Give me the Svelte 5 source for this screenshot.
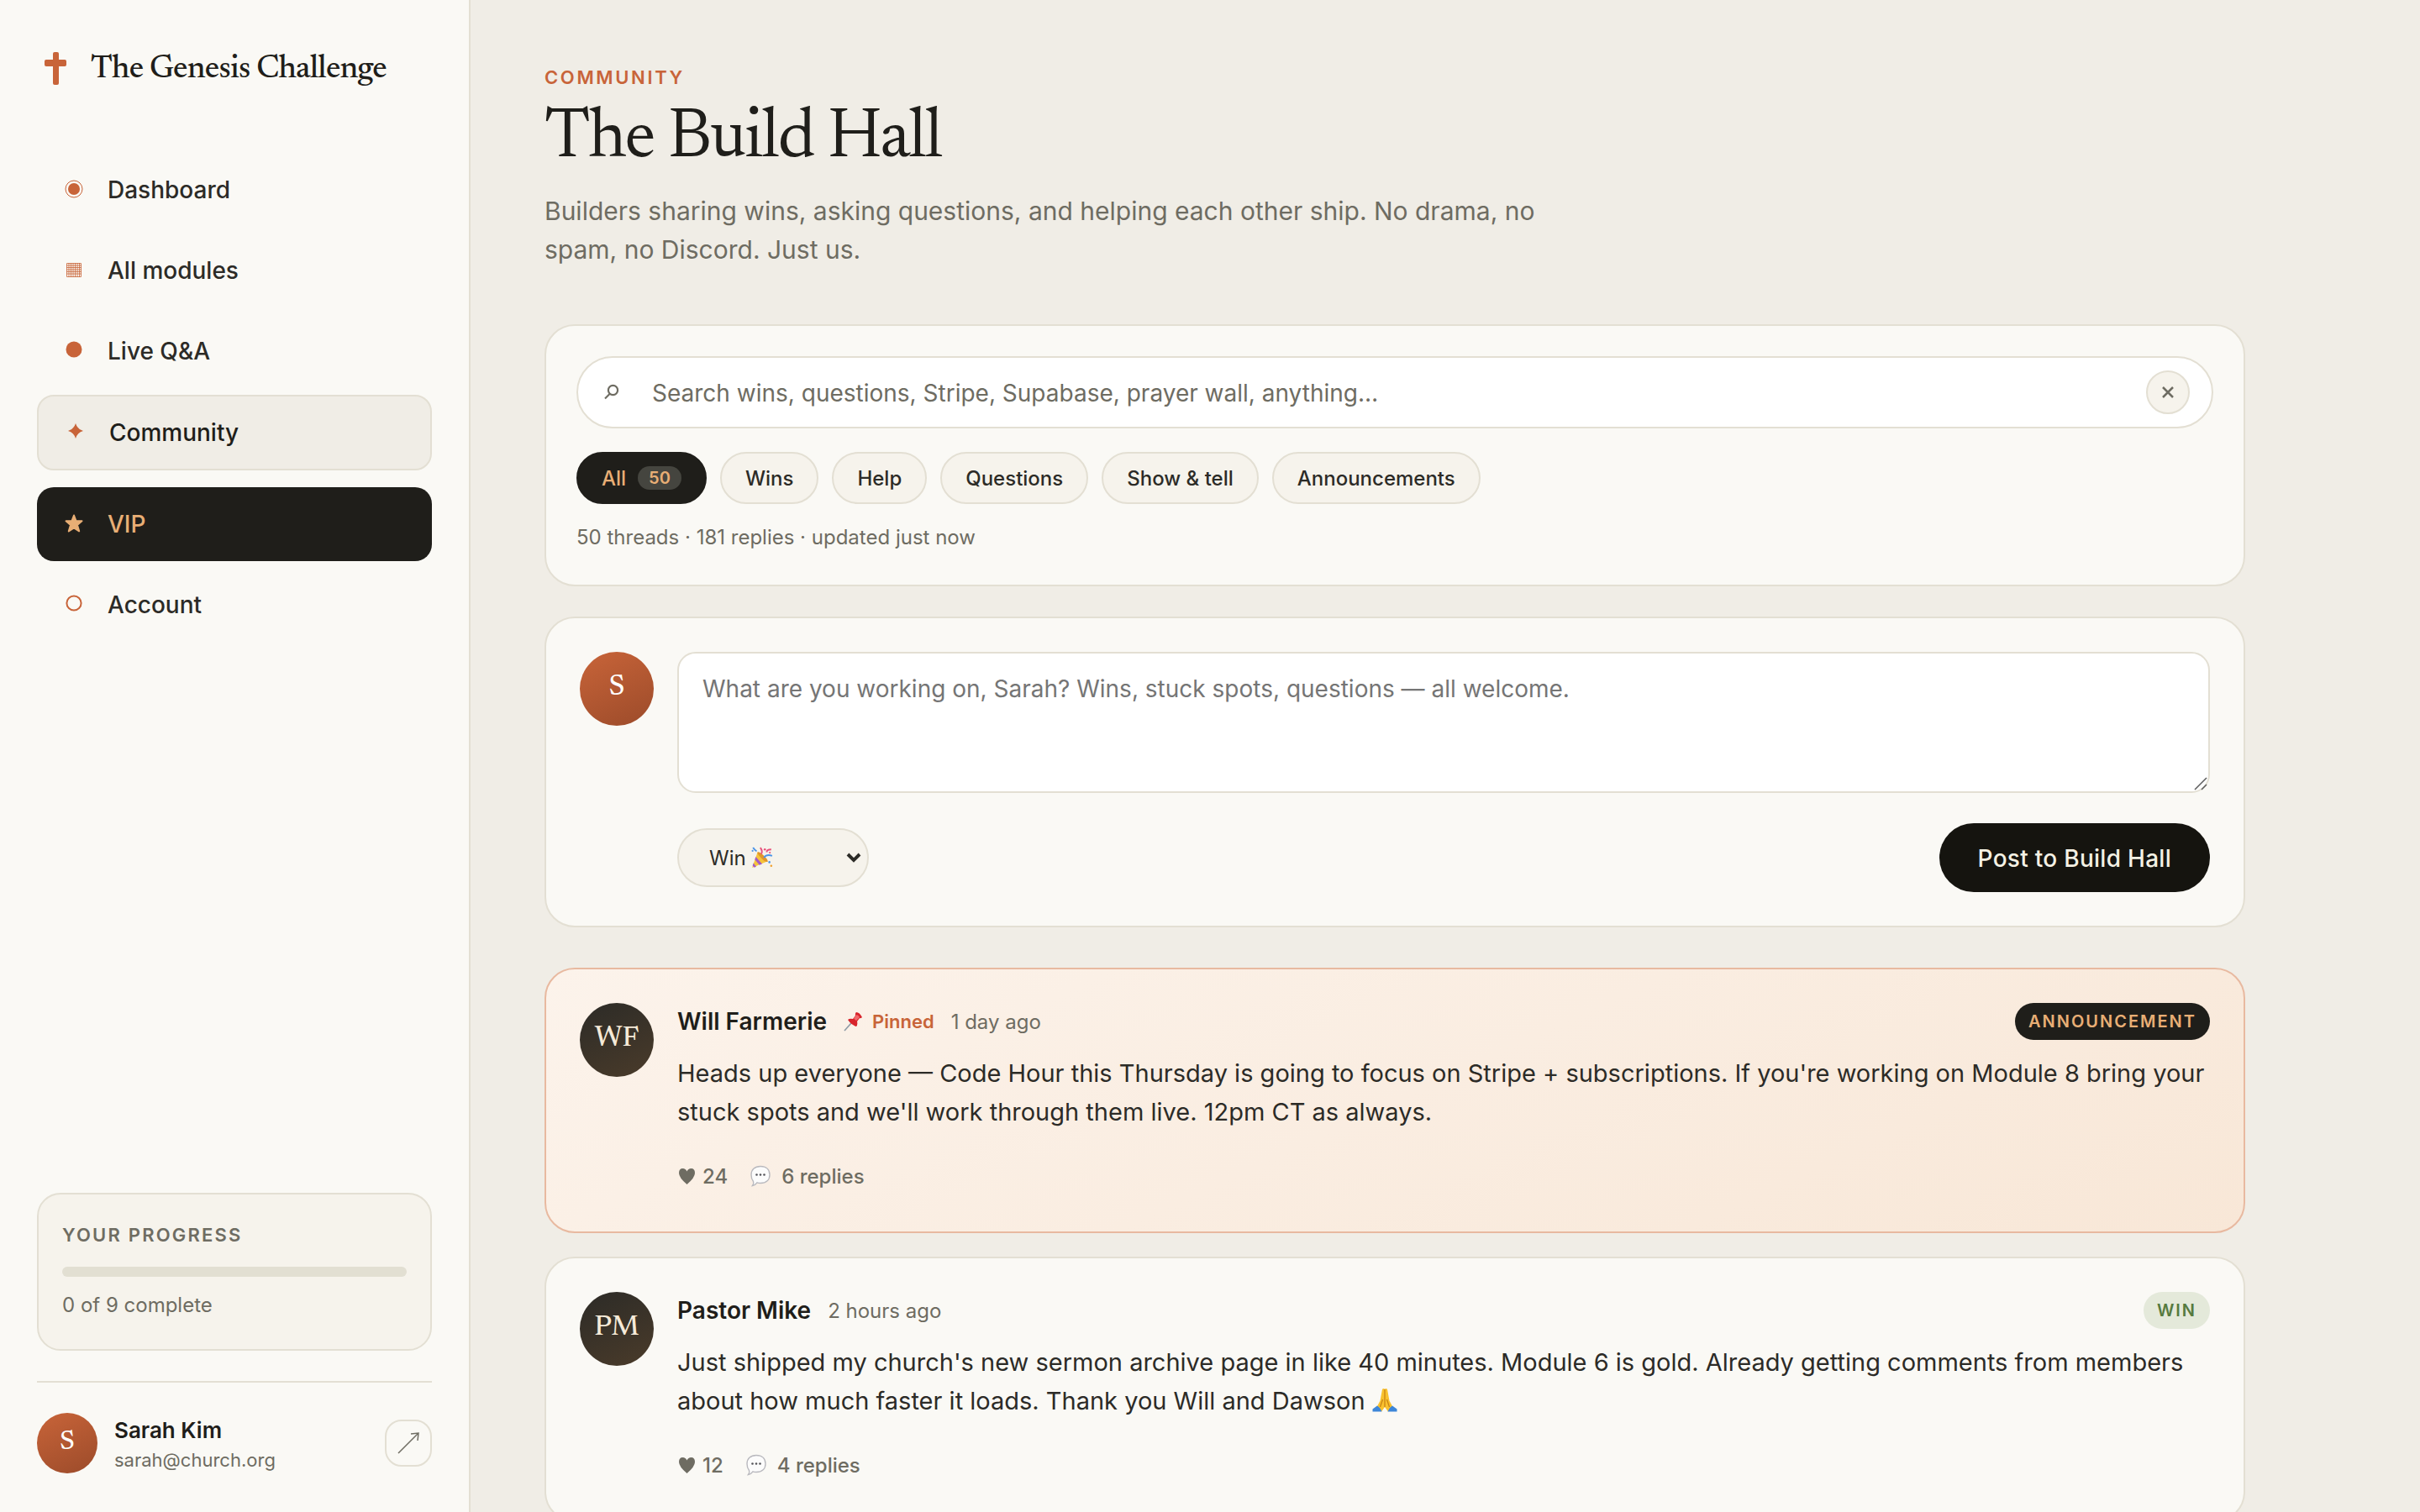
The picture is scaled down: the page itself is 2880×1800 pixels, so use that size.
<script lang="ts">
  type Post = {
    initials: string;
    name: string;
    pinned: boolean;
    time: string;
    tag: string;
    kind: 'announcement' | 'win';
    body: string;
    prayer: boolean;
    likes: number;
    replies: number;
  };

  const nav = [
    { label: 'Dashboard', icon: 'target' },
    { label: 'All modules', icon: 'grid' },
    { label: 'Live Q&A', icon: 'dot' },
    { label: 'Community', icon: 'spark' },
    { label: 'VIP', icon: 'star' },
    { label: 'Account', icon: 'ring' }
  ];

  const filters = ['All', 'Wins', 'Help', 'Questions', 'Show & tell', 'Announcements'];

  const posts: Post[] = [
    {
      initials: 'WF',
      name: 'Will Farmerie',
      pinned: true,
      time: '1 day ago',
      tag: 'Announcement',
      kind: 'announcement',
      body: "Heads up everyone — Code Hour this Thursday is going to focus on Stripe + subscriptions. If you're working on Module 8 bring your stuck spots and we'll work through them live. 12pm CT as always.",
      prayer: false,
      likes: 24,
      replies: 6
    },
    {
      initials: 'PM',
      name: 'Pastor Mike',
      pinned: false,
      time: '2 hours ago',
      tag: 'Win',
      kind: 'win',
      body: "Just shipped my church's new sermon archive page in like 40 minutes. Module 6 is gold. Already getting comments from members about how much faster it loads. Thank you Will and Dawson",
      prayer: true,
      likes: 12,
      replies: 4
    }
  ];

  const done = 0;
  const total = 9;

  let active = $state('All');
  let query = $state('');
  let draft = $state('');
  let kind = $state('Win');
</script>

<div class="shell">
  <aside class="sidebar">
    <a class="brand" href="#home">
      <svg class="cross" viewBox="0 0 44 44" aria-hidden="true">
        <rect x="19" y="2" width="7" height="39" rx="2" />
        <rect x="9" y="11" width="26" height="8" rx="2" />
      </svg>
      <span>The Genesis Challenge</span>
    </a>

    <nav class="nav" aria-label="Main">
      {#each nav as item (item.label)}
        <a
          class="nav-item"
          class:current={item.label === 'Community'}
          class:vip={item.label === 'VIP'}
          href="#{item.icon}"
        >
          <svg class="nav-icon" viewBox="0 0 28 28" aria-hidden="true">
            {#if item.icon === 'target'}
              <circle class="line" cx="14" cy="13" r="10" />
              <circle cx="14" cy="13" r="7" />
            {:else if item.icon === 'grid'}
              <path class="line fine" d="M5.500 5.500h17v16h-17zM8 5v17M10.500 5v17M13 5v17M15.500 5v17M18 5v17M20.500 5v17M5 8h18M5 10.500h18M5 13h18M5 15.500h18M5 18h18" />
            {:else if item.icon === 'dot'}
              <circle cx="14" cy="12" r="9.500" />
            {:else if item.icon === 'spark'}
              <path d="M14 3q2 7 9 9q-7 2-9 9q-2-7-9-9q7-2 9-9z" />
            {:else if item.icon === 'star'}
              <path class="soft" d="M14 3.500l2.600 6.800h6.900l-5.500 4.700l2.200 7.400l-6.200-4.100l-6.200 4.100l2.200-7.400L4.500 10.300h6.900z" />
            {:else}
              <circle class="ring" cx="14" cy="12" r="8.600" />
            {/if}
          </svg>
          <span>{item.label}</span>
        </a>
      {/each}
    </nav>

    <section class="progress">
      <h2>Your progress</h2>
      <div class="track" role="progressbar" aria-label="Your progress" aria-valuemin="0" aria-valuemax={total} aria-valuenow={done}>
        <div class="fill" style="width: {(done / total) * 100}%"></div>
      </div>
      <p>{done} of {total} complete</p>
    </section>

    <footer class="user">
      <span class="avatar small warm">S</span>
      <div class="who">
        <strong>Sarah Kim</strong>
        <span>sarah@church.org</span>
      </div>
      <button class="leave" aria-label="Sign out">
        <svg viewBox="0 0 28 28" aria-hidden="true"><path d="M2 26L26 2M17 3l9-1l-1 9" /></svg>
      </button>
    </footer>
  </aside>

  <main class="main">
    <div class="content">
      <header class="head">
        <p class="eyebrow">Community</p>
        <h1>The Build Hall</h1>
        <p class="lede">Builders sharing wins, asking questions, and helping each other ship. No drama, no spam, no Discord. Just us.</p>
      </header>

      <section class="card finder">
        <div class="search">
          <svg class="lens" viewBox="0 0 20 20" aria-hidden="true"><circle cx="11.500" cy="7.500" r="5.600" /><path d="M8 11.500l-6 6" /></svg>
          <input type="text" aria-label="Search threads" placeholder="Search wins, questions, Stripe, Supabase, prayer wall, anything…" bind:value={query} />
          <button class="clear" aria-label="Clear search" onclick={() => (query = '')}>
            <svg viewBox="0 0 16 16" aria-hidden="true"><path d="M2 2l12 12M14 2L2 14" /></svg>
          </button>
        </div>
        <div class="chips">
          {#each filters as filter (filter)}
            <button class="chip" class:on={active === filter} onclick={() => (active = filter)}>
              {filter}
              {#if filter === 'All'}<span class="count">50</span>{/if}
            </button>
          {/each}
        </div>
        <p class="stats">50 threads · 181 replies · updated just now</p>
      </section>

      <form class="card compose" onsubmit={(e) => e.preventDefault()}>
        <span class="avatar warm">S</span>
        <div class="compose-body">
          <div class="area">
            <textarea aria-label="New post" placeholder="What are you working on, Sarah? Wins, stuck spots, questions — all welcome." bind:value={draft}></textarea>
            <svg class="grip" viewBox="0 0 18 18" aria-hidden="true"><path d="M2 16L16 2M10 16l6-6" /></svg>
          </div>
          <div class="compose-foot">
            <div class="kind">
              <select aria-label="Post type" bind:value={kind}>
                <option>Win</option>
                <option>Help</option>
                <option>Question</option>
              </select>
              <svg class="party" viewBox="0 0 24 24" aria-hidden="true">
                <path fill="#f6c33b" d="M1 23L7 6q7 3 11 10z" />
                <path fill="#a35bc4" d="M5 11l7 8l-3 1l-5-6zM2.500 18l3 4l-2 .8l-2-2z" />
                <path fill="#e0952a" d="M7 6q2-1 7 4q5 5 4 6.500q-2 1-7-4T7 6z" />
                <path fill="none" stroke="#4b94e8" stroke-width="1.800" d="M14 12q3-4 9-2M6 5Q4 4 2 1" />
                <path fill="none" stroke="#e8507a" stroke-width="1.800" d="M11 8q2-3-1-7M17 6q0-3 5-3" />
                <circle fill="#e8507a" cx="15" cy="3" r="1.200" /><circle fill="#4b94e8" cx="20" cy="17" r="1.200" />
                <circle fill="#4b94e8" cx="1.500" cy="4.500" r="1" /><circle fill="#f0a030" cx="22" cy="21" r="1.200" /><circle fill="#e8507a" cx="20.500" cy="6.500" r="1" />
              </svg>
              <svg class="caret" viewBox="0 0 18 12" aria-hidden="true"><path d="M2 2l7 7l7-7" /></svg>
            </div>
            <button class="post-btn" type="submit">Post to Build Hall</button>
          </div>
        </div>
      </form>

      <section class="feed" aria-label="Threads">
        {#each posts as post (post.name)}
          <article class="card post" class:pinned={post.pinned}>
            <span class="avatar">{post.initials}</span>
            <div class="post-body">
              <header class="meta">
                <strong>{post.name}</strong>
                {#if post.pinned}
                  <span class="pin">
                    <svg viewBox="0 0 24 24" aria-hidden="true">
                      <path fill="none" stroke="#8d9aa5" stroke-width="1.600" d="M1 23l8-9" />
                      <path fill="#d8242c" d="M15 1q4 0 7 6q-1 1.500-3 1l-3 4q1 4-1 6q-6-2-10-8q2-2 6-1l3-4q-.500-3 1-4z" />
                      <path fill="#f2686b" d="M15.500 4q2 .5 3.500 3l-4 4q-2-1-3-3z" />
                    </svg>
                    Pinned
                  </span>
                {/if}
                <time>{post.time}</time>
                <span class="tag {post.kind}">{post.tag}</span>
              </header>
              <p class="text">
                {post.body}
                {#if post.prayer}
                  <svg class="pray" viewBox="0 0 30 30" role="img" aria-label="Folded hands">
                    <path fill="#f9c22e" d="M14.600 1.500q-2.200-1.500-2.700 1L9.500 15.500L5.500 23l5.500 5.500l4-5.500l4 5.500l5.500-5.500l-4-7.500L18.100 2.500q-.5-2.500-2.700-1z" />
                    <path fill="none" stroke="#c98416" stroke-width="1.300" d="M15 2v21M12.500 14l-3 9M17.500 14l3 9" />
                    <path fill="#3d86d8" d="M.5 25.500L6 21.500q3.500 2 5.500 7H.5zM29.500 25.500L24 21.500q-3.500 2-5.500 7h11z" />
                  </svg>
                {/if}
              </p>
              <div class="actions">
                <button aria-label="Like, {post.likes}">
                  <svg class="heart" viewBox="0 0 22 22" aria-hidden="true"><path d="M11.500 21Q2 13 2 7.500Q2 2 6.500 2q3.500 0 5 3.500Q13 2 16.500 2q4.500 0 4.500 5.500Q21 13 11.500 21z" /></svg>
                  {post.likes}
                </button>
                <button class="reply">
                  <svg class="bubble" viewBox="0 0 26 26" aria-hidden="true">
                    <path fill="#fcfcfc" stroke="#b9b9be" stroke-width="1.400" d="M13 1.500c7 0 11 4 11 10s-4 10-11 10q-2.500 0-4-.6q-2 3-5.500 3.600q2-2.500 1-5Q2 16.500 2 11.500c0-6 4-10 11-10z" />
                    <circle cx="8.500" cy="11.500" r="1.300" /><circle cx="13" cy="11.500" r="1.300" /><circle cx="17.500" cy="11.500" r="1.300" />
                  </svg>
                  {post.replies} replies
                </button>
              </div>
            </div>
          </article>
        {/each}
      </section>
    </div>
  </main>
</div>

<style>
  :global(body) {
    margin: 0;
    background: #f0ede6;
  }

  .shell {
    --ink: #1f1e1a;
    --text: #2c2b27;
    --muted: #6e6c62;
    --line: #e3dfd3;
    --paper: #faf9f5;
    --cream: #f6f3ec;
    --accent: #c86439;
    --gold: #e8ae75;
    --serif: Newsreader, 'Liberation Serif', serif;
    display: grid;
    grid-template-columns: 560px minmax(0, 1fr);
    height: 100vh;
    font-family: Inter, 'Liberation Sans', sans-serif;
    font-size: 28px;
    color: var(--text);
  }

  .shell *,
  .shell {
    box-sizing: border-box;
  }

  h1, h2, p { margin: 0; }
  button, input, textarea, select { font: inherit; color: inherit; margin: 0; }
  button { cursor: pointer; }
  svg { display: block; flex: none; }

  /* Sidebar */
  .sidebar {
    display: flex;
    flex-direction: column;
    padding: 58px 44px 46px;
    background: var(--paper);
    border-right: 2px solid var(--line);
  }

  .brand {
    display: flex;
    align-items: center;
    gap: 20px;
    height: 48px;
    margin-bottom: 76px;
    font-family: var(--serif);
    font-size: 39px;
    font-weight: 500;
    letter-spacing: -0.02em;
    color: var(--ink);
    text-decoration: none;
  }

  .cross { width: 44px; height: 44px; fill: var(--accent); }

  .nav { display: flex; flex-direction: column; gap: 8px; }

  .nav-item {
    display: flex;
    align-items: center;
    gap: 26px;
    height: 88px;
    padding: 0 30px;
    border-radius: 20px;
    font-weight: 500;
    color: var(--text);
    text-decoration: none;
  }

  .nav-icon { width: 28px; height: 28px; fill: var(--accent); }
  .nav-icon .line { fill: none; stroke: var(--accent); stroke-width: 1; }
  .nav-icon .fine { stroke-width: 0.8; }
  .nav-icon .ring { fill: none; stroke: var(--accent); stroke-width: 2; }
  .nav-icon .soft { stroke: var(--gold); stroke-width: 2; stroke-linejoin: round; }

  .nav-item.current {
    height: 90px;
    border: 2px solid var(--line);
    background: #f0ede6;
    color: var(--ink);
  }

  .nav-item.vip {
    margin-top: 12px;
    background: var(--ink);
    color: var(--gold);
  }

  .nav-item.vip .nav-icon { fill: var(--gold); }

  .progress {
    margin-top: auto;
    padding: 34px 28px 36px;
    border: 2px solid var(--line);
    border-radius: 28px;
    background: var(--cream);
    color: var(--muted);
  }

  .progress h2 {
    font-size: 22px;
    font-weight: 600;
    line-height: 28px;
    letter-spacing: 0.1em;
    text-transform: uppercase;
  }

  .track {
    height: 12px;
    margin: 24px 0 18px;
    border-radius: 6px;
    background: #e2dfd2;
    overflow: hidden;
  }

  .fill { height: 100%; background: var(--accent); }
  .progress p { font-size: 24px; line-height: 32px; }

  .user {
    display: flex;
    align-items: center;
    gap: 20px;
    margin-top: 36px;
    padding-top: 36px;
    border-top: 2px solid var(--line);
  }

  .who { display: flex; flex-direction: column; flex: 1; padding-top: 2px; }
  .who strong { font-size: 26px; font-weight: 600; line-height: 38px; color: var(--ink); }
  .who span { font-size: 22px; line-height: 32px; color: var(--muted); }

  .leave {
    display: grid;
    place-items: center;
    width: 56px;
    height: 56px;
    padding: 0;
    border: 2px solid var(--line);
    border-radius: 20px;
    background: none;
  }

  .leave svg { width: 28px; height: 28px; fill: none; stroke: var(--muted); stroke-width: 1.5; }

  .avatar {
    display: flex;
    align-items: center;
    justify-content: center;
    flex: none;
    width: 88px;
    height: 88px;
    padding-bottom: 2px;
    border-radius: 50%;
    background: linear-gradient(155deg, #2c2b27, #4a3b2a);
    font-family: var(--serif);
    font-size: 34px;
    font-weight: 500;
    color: #f6ead8;
  }

  .avatar.warm { background: linear-gradient(155deg, #c86439, #9c4b2a); color: #ffffff; }
  .avatar.small { width: 72px; height: 72px; font-size: 32px; }

  /* Main column */
  .main { overflow-y: auto; scrollbar-width: none; }

  .content {
    max-width: 2200px;
    padding: 74px 88px 88px;
  }

  .eyebrow {
    font-size: 22px;
    font-weight: 600;
    line-height: 36px;
    letter-spacing: 0.12em;
    text-transform: uppercase;
    color: var(--accent);
  }

  h1 {
    margin-top: 10px;
    font-family: var(--serif);
    font-size: 84px;
    font-weight: 400;
    line-height: 92px;
    letter-spacing: -0.025em;
    color: var(--ink);
  }

  .lede {
    max-width: 1200px;
    margin: 16px 0 66px;
    font-size: 30px;
    line-height: 46px;
    color: var(--muted);
  }

  .card {
    border: 2px solid var(--line);
    border-radius: 36px;
    background: var(--paper);
  }

  .finder { padding: 36px 36px 40px; }

  .search {
    display: flex;
    align-items: center;
    height: 86px;
    padding: 0 26px 0 30px;
    border: 2px solid var(--line);
    border-radius: 43px;
    background: #ffffff;
  }

  .lens { width: 20px; height: 20px; fill: none; stroke: var(--muted); stroke-width: 2.2; }

  .search input {
    flex: 1;
    min-width: 0;
    padding: 2px 24px 0 38px;
    border: 0;
    outline: 0;
    background: none;
  }

  .search input::placeholder { color: var(--muted); opacity: 1; }

  .clear {
    display: grid;
    place-items: center;
    width: 52px;
    height: 52px;
    padding: 0;
    border: 2px solid var(--line);
    border-radius: 50%;
    background: var(--cream);
  }

  .clear svg { width: 16px; height: 16px; fill: none; stroke: var(--muted); stroke-width: 2.5; }

  .chips { display: flex; flex-wrap: wrap; gap: 16px; margin-top: 28px; }

  .chip {
    display: flex;
    align-items: center;
    gap: 14px;
    height: 62px;
    padding: 0 28px;
    border: 2px solid var(--line);
    border-radius: 31px;
    background: var(--cream);
    font-size: 24px;
    font-weight: 500;
  }

  .chip.on { border-color: var(--ink); background: var(--ink); color: var(--gold); }

  .count {
    padding: 0 13px;
    border-radius: 14px;
    background: #45453f;
    font-size: 20px;
    font-weight: 600;
    line-height: 28px;
  }

  .stats { margin-top: 24px; font-size: 24px; line-height: 32px; color: var(--muted); }

  .compose,
  .post { display: flex; gap: 28px; padding: 40px; }

  .compose { margin-top: 36px; }
  .post { padding-bottom: 44px; }

  .compose-body,
  .post-body { flex: 1; min-width: 0; }

  .area { position: relative; }

  textarea {
    display: block;
    width: 100%;
    height: 168px;
    padding: 20px 28px;
    border: 2px solid var(--line);
    border-radius: 22px;
    outline: 0;
    background: #ffffff;
    line-height: 44px;
    resize: none;
  }

  textarea::placeholder { color: #757575; opacity: 1; }

  .grip {
    position: absolute;
    right: 2px;
    bottom: 2px;
    width: 18px;
    height: 18px;
    fill: none;
    stroke: #5c5c5c;
    stroke-width: 1.5;
  }

  .compose-foot {
    display: flex;
    align-items: center;
    justify-content: space-between;
    margin-top: 36px;
  }

  .kind { position: relative; }

  select {
    appearance: none;
    width: 228px;
    height: 70px;
    padding: 0 36px;
    border: 2px solid var(--line);
    border-radius: 35px;
    background: var(--cream);
    font-size: 24px;
    font-weight: 400;
  }

  .party { position: absolute; left: 88px; top: 22px; width: 26px; height: 26px; pointer-events: none; }

  .caret {
    position: absolute;
    right: 9px;
    top: 29px;
    width: 18px;
    height: 12px;
    fill: none;
    stroke: var(--text);
    stroke-width: 4;
    pointer-events: none;
  }

  .post-btn {
    height: 82px;
    padding: 2px 46px 0;
    border: 0;
    border-radius: 41px;
    background: #15140f;
    font-weight: 500;
    letter-spacing: 0.01em;
    color: #f4f1e4;
  }

  .feed { display: flex; flex-direction: column; gap: 28px; margin-top: 48px; }

  .pinned { border-color: #e8b9a0; background: linear-gradient(155deg, #fcf3eb, #f8e7d7); }

  .meta { display: flex; align-items: center; gap: 20px; height: 44px; }
  .meta strong { font-weight: 600; color: var(--ink); }
  .meta time { font-size: 24px; color: var(--muted); }

  .pin {
    display: flex;
    align-items: center;
    gap: 10px;
    font-size: 22px;
    font-weight: 600;
    color: var(--accent);
  }

  .pin svg { width: 24px; height: 24px; }

  .tag {
    margin-left: auto;
    padding: 0 16px;
    border-radius: 22px;
    font-size: 20px;
    font-weight: 600;
    line-height: 44px;
    letter-spacing: 0.1em;
    text-transform: uppercase;
  }

  .tag.announcement { background: var(--ink); color: var(--gold); }
  .tag.win { background: #e4e9da; color: #567a3f; }

  .text { margin-top: 17px; font-size: 29px; line-height: 46px; }

  .pray { display: inline-block; width: 30px; height: 30px; vertical-align: -4px; }

  .actions { display: flex; gap: 26px; margin-top: 31px; }

  .actions button {
    display: flex;
    align-items: center;
    gap: 8px;
    height: 44px;
    padding: 0;
    border: 0;
    background: none;
    font-size: 24px;
    font-weight: 500;
    color: var(--muted);
  }

  .actions .reply { gap: 12px; }
  .heart { width: 22px; height: 22px; fill: var(--muted); }
  .bubble { width: 26px; height: 26px; fill: #55555a; }
</style>
